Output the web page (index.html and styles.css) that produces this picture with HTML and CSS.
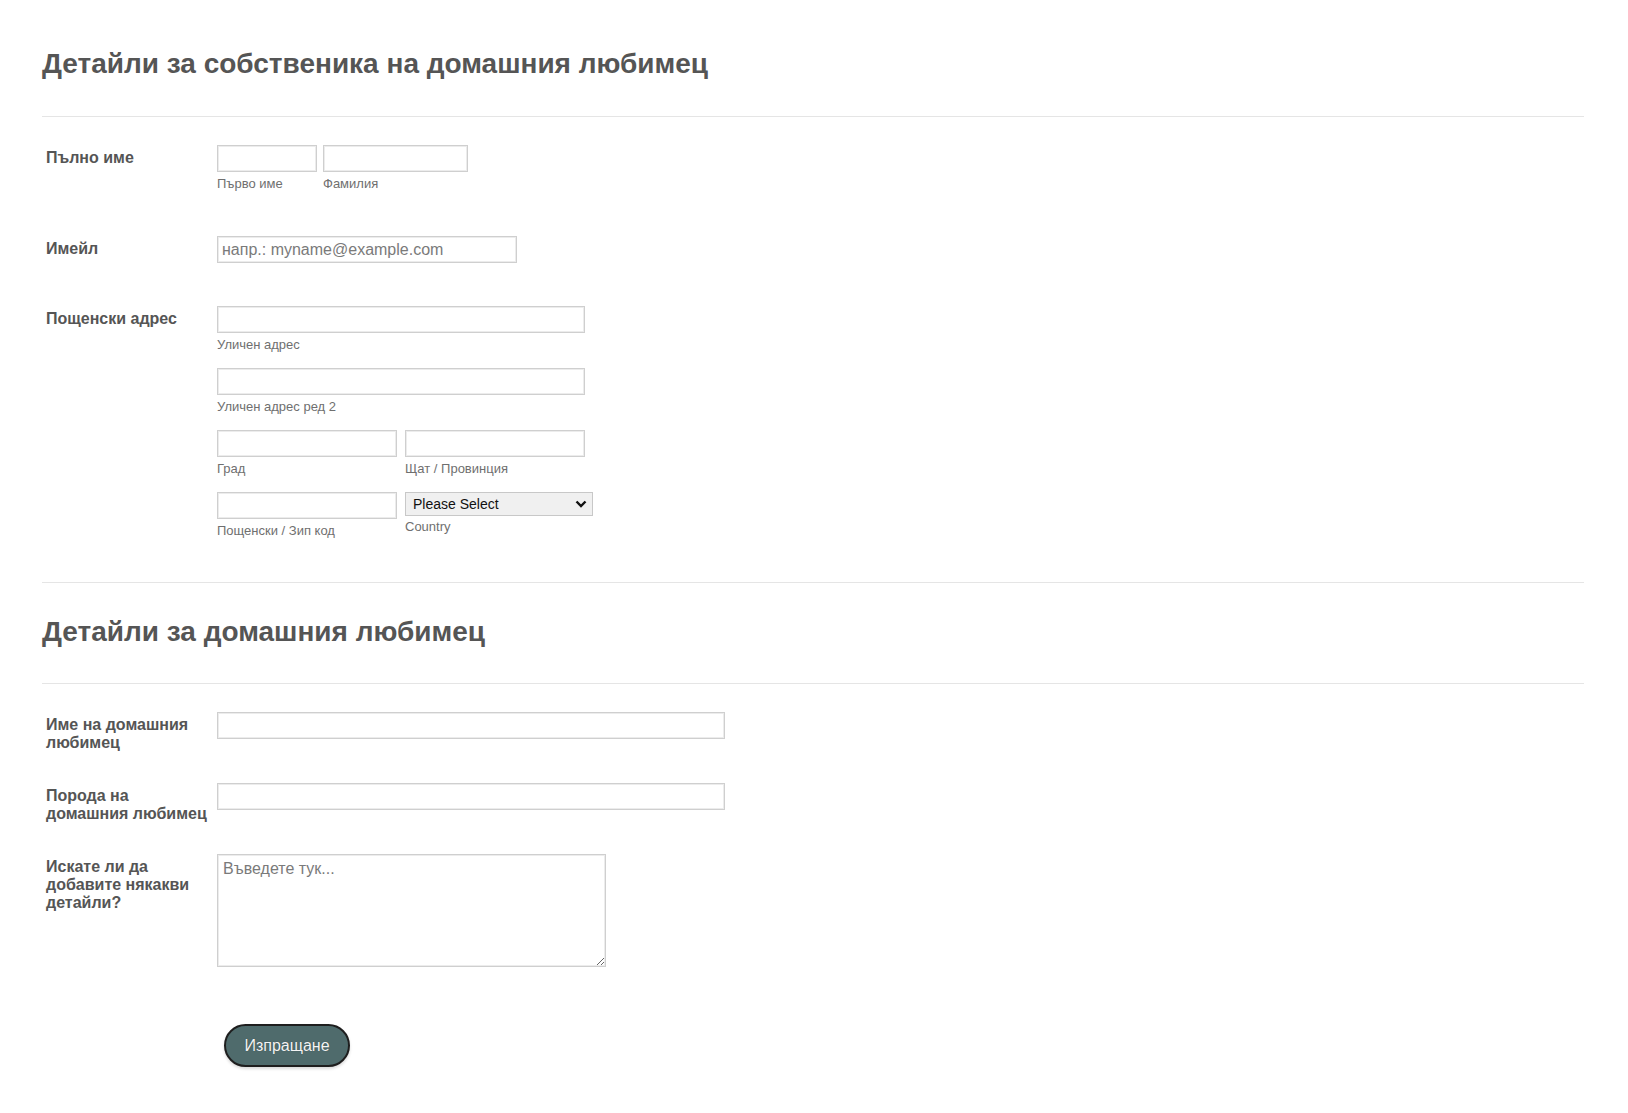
FILE: index.html
```html
<!DOCTYPE html>
<html lang="bg">
<head>
    <meta charset="UTF-8">
    <meta name="viewport" content="width=device-width, initial-scale=1.0">
    <title>Детайли за домашния любимец</title>
    <link rel="stylesheet" href="styles.css">
</head>
<body>

<form class="form-all">
    <!-- Owner section -->
    <div class="form-header-group first">
        <h2 class="form-header">Детайли за собственика на домашния любимец</h2>
    </div>

    <ul class="form-section">
        <li class="form-line">
            <label class="form-label">Пълно име</label>
            <div class="form-input">
                <div class="sub-row">
                    <span class="sub-field">
                        <input type="text" class="input-first">
                        <label class="sub-label">Първо име</label>
                    </span>
                    <span class="sub-field">
                        <input type="text" class="input-last">
                        <label class="sub-label">Фамилия</label>
                    </span>
                </div>
            </div>
        </li>

        <li class="form-line">
            <label class="form-label">Имейл</label>
            <div class="form-input">
                <input type="email" class="input-email" placeholder="напр.: myname@example.com">
            </div>
        </li>

        <li class="form-line">
            <label class="form-label">Пощенски адрес</label>
            <div class="form-input address">
                <span class="sub-field">
                    <input type="text" class="input-address">
                    <label class="sub-label">Уличен адрес</label>
                </span>
                <span class="sub-field">
                    <input type="text" class="input-address">
                    <label class="sub-label">Уличен адрес ред 2</label>
                </span>
                <div class="sub-row wide">
                    <span class="sub-field">
                        <input type="text" class="input-half">
                        <label class="sub-label">Град</label>
                    </span>
                    <span class="sub-field">
                        <input type="text" class="input-half">
                        <label class="sub-label">Щат / Провинция</label>
                    </span>
                </div>
                <div class="sub-row wide last">
                    <span class="sub-field">
                        <input type="text" class="input-half">
                        <label class="sub-label">Пощенски / Зип код</label>
                    </span>
                    <span class="sub-field">
                        <span class="select-wrap">
                            <select class="input-country">
                                <option>Please Select</option>
                                <option>Bulgaria</option>
                            </select>
                            <svg class="select-arrow" width="12" height="8" viewBox="0 0 12 8">
                                <path d="M1.5 1.5 L6 6 L10.5 1.5" fill="none" stroke="#111" stroke-width="2.4"/>
                            </svg>
                        </span>
                        <label class="sub-label country">Country</label>
                    </span>
                </div>
            </div>
        </li>
    </ul>

    <!-- Pet section -->
    <div class="form-header-group">
        <h2 class="form-header">Детайли за домашния любимец</h2>
    </div>

    <ul class="form-section">
        <li class="form-line">
            <label class="form-label">Име на домашния любимец</label>
            <div class="form-input">
                <input type="text" class="input-long">
            </div>
        </li>

        <li class="form-line">
            <label class="form-label">Порода на домашния любимец</label>
            <div class="form-input">
                <input type="text" class="input-long">
            </div>
        </li>

        <li class="form-line">
            <label class="form-label">Искате ли да добавите някакви детайли?</label>
            <div class="form-input">
                <textarea class="input-details" placeholder="Въведете тук..."></textarea>
            </div>
        </li>

        <li class="form-line buttons">
            <div></div>
            <div>
                <button type="submit" class="submit-button">Изпращане</button>
            </div>
        </li>
    </ul>
</form>

</body>
</html>
```

FILE: styles.css
```css
* {
    box-sizing: border-box;
    margin: 0;
    padding: 0;
}

body {
    font-family: 'Liberation Sans', Arial, sans-serif;
    background-color: #fff;
    color: #555;
}

.form-all {
    padding: 14px 44px 0 42px;
    border-bottom: 1px solid #ececec;
}

/* Section headers */
.form-header-group {
    padding: 34px 0 36px;
    border-top: 1px solid #e5e5e5;
    border-bottom: 1px solid #e5e5e5;
    margin-top: 27px;
}

.form-header-group.first {
    padding: 35px 0 37px;
    margin-top: 0;
    border-top: none;
}

.form-header {
    font-size: 28px;
    line-height: 30px;
    font-weight: bold;
    color: #555;
}

.form-section {
    list-style: none;
}

/* Rows */
.form-line {
    display: grid;
    grid-template-columns: 175px 1fr;
    padding: 28px 0 3px;
}

.form-label {
    font-size: 16px;
    line-height: 18px;
    font-weight: bold;
    color: #555;
    padding: 4px 4px 0 4px;
}

.form-input {
    padding-bottom: 12px;
}

.sub-row {
    display: flex;
    gap: 6px;
}

.sub-row.wide {
    gap: 8px;
}

.sub-field {
    display: flex;
    flex-direction: column;
}

.address .sub-field {
    margin-bottom: 14px;
}

.address .sub-row.last .sub-field {
    margin-bottom: 0;
}

.sub-label {
    font-size: 13px;
    line-height: 18px;
    margin-top: 3px;
    color: #6f6f6f;
}

.sub-label.country {
    margin-top: 2px;
}

/* Inputs */
input,
textarea,
select {
    font-family: 'Liberation Sans', Arial, sans-serif;
    font-size: 16px;
    color: #333;
    border: 1px solid #cfcfcf;
    box-shadow: inset 0 0 0 1px #ececec;
    background: #fff;
    outline: none;
}

input {
    height: 27px;
    padding: 0 4px;
}

input::placeholder,
textarea::placeholder {
    color: #7a7a7a;
}

.input-first { width: 100px; }
.input-last { width: 145px; }
.input-email { width: 300px; }
.input-address { width: 368px; }
.input-half { width: 180px; }
.input-long { width: 508px; }

.input-details {
    display: block;
    width: 389px;
    height: 113px;
    padding: 4px 5px;
    resize: both;
    line-height: 20px;
}

.select-wrap {
    position: relative;
    display: block;
    width: 188px;
}

.input-country {
    appearance: none;
    display: block;
    width: 188px;
    height: 24px;
    padding: 0 7px;
    font-size: 14px;
    color: #111;
    background-color: #f0f0f0;
    border: 1px solid #c8c8c8;
    box-shadow: none;
}

.select-arrow {
    position: absolute;
    right: 6px;
    top: 8px;
    pointer-events: none;
}

/* Submit */
.form-line.buttons {
    padding: 42px 0 47px;
}

.submit-button {
    display: block;
    margin-left: 7px;
    width: 126px;
    height: 43px;
    font-family: 'Liberation Sans', Arial, sans-serif;
    font-size: 16px;
    color: #f4f4f4;
    background-color: #4f6b6c;
    border: 2px solid #1e1e1e;
    border-radius: 22px;
    box-shadow: 0 2px 3px rgba(0, 0, 0, 0.15);
    text-shadow: 0 0 1px rgba(0, 0, 0, 0.4);
    cursor: pointer;
}

.submit-button:hover {
    background-color: #425a5b;
}
```
